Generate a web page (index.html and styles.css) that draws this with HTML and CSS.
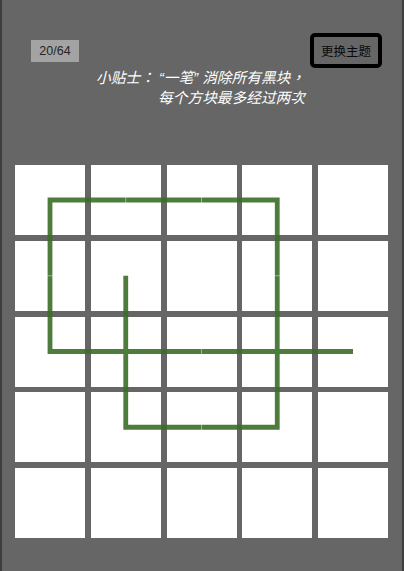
FILE: index.html
```html
<!DOCTYPE html>
<html lang="zh">
<head>
<meta charset="utf-8">
<title>一笔画</title>
<link rel="stylesheet" href="styles.css">
</head>
<body>
<div class="app">
  <header class="top">
    <div class="counter">20/64</div>
    <button class="theme">更换主题</button>
  </header>
  <p class="tip" lang="zh-TW">小贴士： “一笔” 消除所有黑块，<br>每个方块最多经过两次</p>
  <div class="board">
    <div class="grid">
      <div class="cell"></div><div class="cell"></div><div class="cell"></div><div class="cell"></div><div class="cell"></div>
      <div class="cell"></div><div class="cell"></div><div class="cell"></div><div class="cell"></div><div class="cell"></div>
      <div class="cell"></div><div class="cell"></div><div class="cell"></div><div class="cell"></div><div class="cell"></div>
      <div class="cell"></div><div class="cell"></div><div class="cell"></div><div class="cell"></div><div class="cell"></div>
      <div class="cell"></div><div class="cell"></div><div class="cell"></div><div class="cell"></div><div class="cell"></div>
    </div>
    <svg class="trail" width="373" height="373" viewBox="0 0 373 373">
      <polyline class="stroke" points="110.75,110.75 110.75,262.25 262.25,262.25 262.25,35 35,35 35,186.5 338,186.5"/>
      <g class="ticks">
        <line x1="110.75" y1="32" x2="110.75" y2="38"/>
        <line x1="186.5" y1="32" x2="186.5" y2="38"/>
        <line x1="32" y1="110.75" x2="38" y2="110.75"/>
        <line x1="259.25" y1="110.75" x2="265.25" y2="110.75"/>
        <line x1="186.5" y1="183.5" x2="186.5" y2="189.5"/>
        <line x1="186.5" y1="259.25" x2="186.5" y2="265.25"/>
      </g>
    </svg>
  </div>
</div>
</body>
</html>
```
FILE: styles.css
```css
html, body {
  margin: 0;
  padding: 0;
  background: #666666;
}
.app {
  width: 400px;
  height: 571px;
  border-left: 2px solid #3d3d3d;
  border-right: 2px solid #3d3d3d;
  background: #666666;
  box-sizing: content-box;
}
.top {
  display: flex;
  justify-content: space-between;
  align-items: flex-start;
  padding: 33px 20px 0 29px;
}
.counter {
  margin-top: 7px;
  width: 48px;
  height: 22px;
  background: #a3a3a3;
  color: #262626;
  font-family: "Liberation Sans", Arial, sans-serif;
  font-size: 12.5px;
  line-height: 22px;
  text-align: center;
}
.theme {
  box-sizing: border-box;
  width: 72px;
  height: 35px;
  margin: 0;
  padding: 0;
  border: 4px solid #000;
  border-radius: 5px;
  background: transparent;
  color: #0a0a0a;
  font-family: "Noto Sans CJK SC", sans-serif;
  font-size: 12.5px;
  line-height: 27px;
  text-align: center;
}
.tip {
  margin: 0;
  padding-right: 97px;
  text-align: right;
  color: #ffffff;
  font-family: "Liberation Sans", "Noto Sans CJK TC", sans-serif;
  font-style: italic;
  font-size: 14.7px;
  line-height: 20px;
}
.board {
  position: relative;
  margin: 57px 0 0 13px;
  width: 373px;
  height: 373px;
}
.grid {
  display: grid;
  grid-template-columns: repeat(5, 70px);
  grid-template-rows: repeat(5, 70px);
  gap: 5.75px;
}
.cell {
  background: #ffffff;
}
.trail {
  position: absolute;
  left: 0;
  top: 0;
  overflow: visible;
}
.stroke {
  fill: none;
  stroke: #3a6e28;
  stroke-opacity: 0.9;
  stroke-width: 4.8;
  stroke-linejoin: miter;
  stroke-linecap: butt;
}
.ticks line {
  stroke: rgba(255, 255, 255, 0.55);
  stroke-width: 0.8;
}
```
